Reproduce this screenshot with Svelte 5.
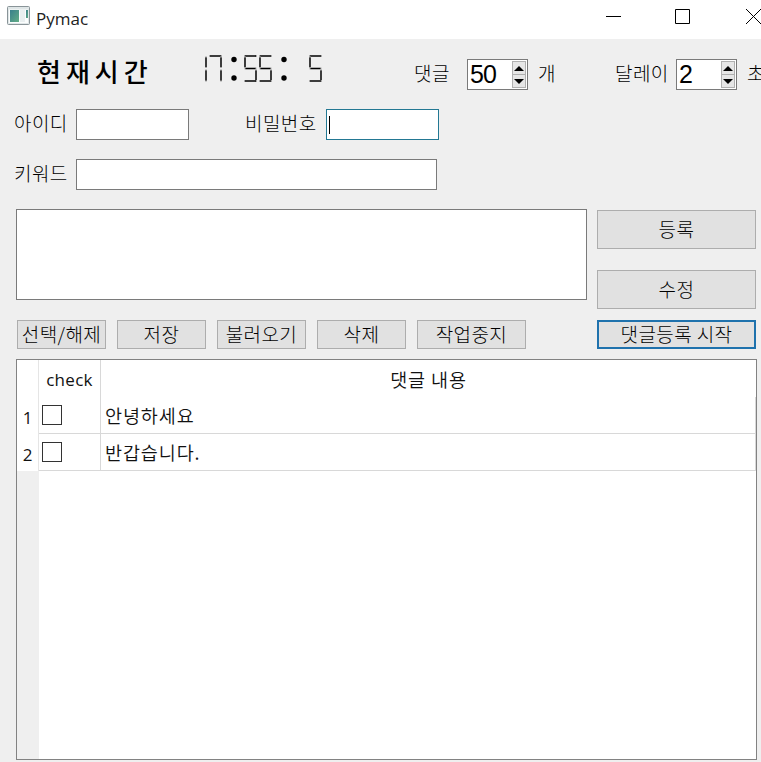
<script>
  // Segments: a top, b upper right, c lower right, d bottom, e lower left, f upper left, g middle
  const segments = {
    a: [1, 1, 12, 1],
    b: [12, 2.5, 12, 12],
    c: [12, 15.5, 12, 25.5],
    d: [1, 26, 12, 26],
    e: [1, 15.5, 1, 25.5],
    f: [1, 2.5, 1, 12],
    g: [1.5, 13.5, 11.5, 13.5],
  }

  const digits = {
    ' ': '',
    0: 'abcdef',
    1: 'bc',
    2: 'abged',
    3: 'abgcd',
    4: 'fgbc',
    5: 'afgcd',
    6: 'afgecd',
    7: 'abc',
    8: 'abcdefg',
    9: 'abcdfg',
  }

  let time = '17:55: 5'
  let count = $state(50)
  let delay = $state(2)
  let id = $state('')
  let password = $state('')
  let keyword = $state('')
  let comment = $state('')

  let rows = $state([
    { checked: false, text: '안녕하세요' },
    { checked: false, text: '반갑습니다.' },
  ])

  const toggleAll = () => {
    const all = rows.every((row) => row.checked)
    rows.forEach((row) => (row.checked = !all))
  }

  const add = () => {
    if (comment.trim()) {
      rows.push({ checked: false, text: comment.trim() })
      comment = ''
    }
  }

  const remove = () => {
    rows = rows.filter((row) => !row.checked)
  }
</script>

{#snippet arrows(up, down)}
  <span class="arrows">
    <button onclick={up} aria-label="up">
      <svg width="10" height="5" viewBox="0 0 10 5"><path d="M0 5L5 0L10 5Z" /></svg>
    </button>
    <button onclick={down} aria-label="down">
      <svg width="10" height="5" viewBox="0 0 10 5"><path d="M0 0L5 5L10 0Z" /></svg>
    </button>
  </span>
{/snippet}

<div class="window">
  <header>
    <svg class="app-icon" width="23" height="20" viewBox="0 0 23 20">
      <defs>
        <linearGradient id="pane" x1="0" y1="0" x2="1" y2="1">
          <stop offset="0" stop-color="#397f8c" />
          <stop offset="1" stop-color="#63ad86" />
        </linearGradient>
      </defs>
      <rect x="0.5" y="0.5" width="22" height="18" rx="1" fill="#dfe6e7" stroke="#899498" />
      <rect x="2" y="3.5" width="19" height="13.5" fill="#fbfdfd" />
      <rect x="3" y="4" width="9" height="12" fill="url(#pane)" />
      <rect x="13" y="4" width="5" height="12" fill="#e9eff0" />
      <rect x="19" y="4" width="2" height="8" fill="url(#pane)" />
    </svg>
    <span class="title">Pymac</span>
    <svg class="controls" width="156" height="17" viewBox="0 0 156 17">
      <path d="M1 8.5H16M70.5 1.5H84.5V15.5H70.5ZM141 1L156 16M156 1L141 16" />
    </svg>
  </header>

  <div class="row top">
    <h1>현재시간</h1>
    <div class="clock" role="timer" aria-label={time}>
      {#each time as char}
        {#if char === ':'}
          <svg width="20" height="28" viewBox="0 0 20 28">
            <circle cx="10" cy="4.5" r="2.7" />
            <circle cx="10" cy="23" r="2.7" />
          </svg>
        {:else}
          <svg width="15" height="28" viewBox="0 0 15 28">
            {#each digits[char] as name}
              {@const [x1, y1, x2, y2] = segments[name]}
              <line class="bevel" {x1} {y1} {x2} {y2} />
              <line {x1} {y1} {x2} {y2} />
            {/each}
          </svg>
        {/if}
      {/each}
    </div>
    <span class="label comments">댓글</span>
    <div class="spin">
      <input bind:value={count} aria-label="댓글" />
      {@render arrows(() => count++, () => count--)}
    </div>
    <span class="label unit">개</span>
    <span class="label delay">달레이</span>
    <div class="spin">
      <input bind:value={delay} aria-label="달레이" />
      {@render arrows(() => delay++, () => delay--)}
    </div>
    <span class="label unit">초</span>
  </div>

  <div class="row">
    <label class="label" for="id">아이디</label>
    <input class="field" id="id" bind:value={id} />
    <label class="label password" for="password">비밀번호</label>
    <div class="active">
      <input class="field" id="password" type="password" bind:value={password} />
      <span class="caret"></span>
    </div>
  </div>

  <div class="row">
    <label class="label" for="keyword">키워드</label>
    <input class="field wide" id="keyword" bind:value={keyword} />
  </div>

  <div class="editor">
    <textarea bind:value={comment} aria-label="댓글 내용"></textarea>
    <div class="side">
      <button class="btn tall" onclick={add}>등록</button>
      <button class="btn tall">수정</button>
    </div>
  </div>

  <div class="actions">
    <button class="btn" onclick={toggleAll}>선택/해제</button>
    <button class="btn">저장</button>
    <button class="btn">불러오기</button>
    <button class="btn" onclick={remove}>삭제</button>
    <button class="btn stop">작업중지</button>
    <button class="btn start">댓글등록 시작</button>
  </div>

  <div class="table">
    <div class="line head">
      <span class="num"></span>
      <span class="check">check</span>
      <span class="text">댓글 내용</span>
    </div>
    {#each rows as row, i}
      <div class="line">
        <span class="num">{i + 1}</span>
        <span class="check"><input type="checkbox" bind:checked={row.checked} aria-label={row.text} /></span>
        <span class="text">{row.text}</span>
      </div>
    {/each}
    <div class="rest"></div>
  </div>
</div>

<style>
  :global(body) {
    margin: 0;
    overflow: hidden;
  }

  .window {
    width: 761px;
    height: 762px;
    box-sizing: border-box;
    overflow: hidden;
    background: #efefef;
    color: #000;
    font-family: 'Noto Sans CJK KR', sans-serif;
    font-size: 19px;
    font-weight: 300;
    letter-spacing: 0.4px;
  }

  .window * {
    box-sizing: border-box;
  }

  svg {
    display: block;
    flex: none;
  }

  input,
  button,
  textarea {
    margin: 0;
    padding: 0;
    border-radius: 0;
    outline: none;
    font: inherit;
    letter-spacing: inherit;
    color: inherit;
  }

  header {
    display: flex;
    height: 39px;
    padding-left: 7px;
    background: #fff;
  }

  .app-icon {
    margin-top: 6px;
  }

  .title {
    width: 60px;
    margin: 6px 0 0 6px;
    font: 17px/25px 'Open Sans', sans-serif;
    letter-spacing: 0;
    color: #222;
  }

  .controls {
    margin: 8px 0 0 509px;
    fill: none;
    stroke: #000;
  }

  .row {
    display: flex;
    height: 31px;
    margin-bottom: 19px;
    padding-left: 14px;
    white-space: nowrap;
  }

  .top {
    margin-top: 20px;
  }

  h1 {
    flex: none;
    width: 157px;
    margin: -7px 0 0 23px;
    font-size: 26px;
    font-weight: 500;
    line-height: 38px;
    letter-spacing: 5px;
  }

  .clock {
    display: flex;
    flex: none;
    width: 220px;
    margin-top: -4px;
  }

  .clock line {
    stroke: #000;
    stroke-width: 1.3;
  }

  .clock .bevel {
    stroke: #aaa;
    stroke-width: 2;
    stroke-linecap: square;
  }

  .label {
    flex: none;
    width: 62px;
    line-height: 27px;
  }

  .comments {
    width: 53px;
  }

  .unit {
    width: 18px;
    margin-left: 10px;
  }

  .delay {
    width: 61px;
    margin-left: 59px;
  }

  .password {
    width: 81px;
    margin-left: 56px;
  }

  .spin {
    display: flex;
    flex: none;
    width: 61px;
    height: 31px;
    border: 1px solid #7a7a7a;
    background: #fff;
  }

  .spin input {
    width: 44px;
    height: 29px;
    padding-left: 2px;
    border: 0;
    background: none;
    font: 25px/29px 'Liberation Sans', sans-serif;
    letter-spacing: -1px;
  }

  .arrows {
    display: flex;
    flex-direction: column;
    width: 14px;
    height: 27px;
    margin-top: 1px;
    border: 1px solid #b0b0b0;
    background: #e6e6e6;
  }

  .arrows button {
    display: flex;
    flex: 1;
    align-items: center;
    justify-content: center;
    border: 0;
    background: none;
  }

  .arrows button + button {
    border-top: 1px solid #b0b0b0;
  }

  .field {
    flex: none;
    width: 113px;
    height: 31px;
    padding: 0 4px;
    border: 1px solid #7a7a7a;
    background: #fff;
  }

  .wide {
    width: 361px;
  }

  .active {
    position: relative;
  }

  .active .field {
    display: block;
    border-color: #237893;
  }

  .caret {
    position: absolute;
    top: 7px;
    left: 3px;
    width: 1px;
    height: 18px;
    background: #000;
  }

  .editor {
    display: flex;
    gap: 10px;
    margin-left: 16px;
  }

  textarea {
    width: 571px;
    height: 91px;
    padding: 4px;
    border: 1px solid #7a7a7a;
    background: #fff;
    resize: none;
  }

  .side {
    display: flex;
    flex-direction: column;
    gap: 21px;
    margin-top: 1px;
  }

  .btn {
    width: 89px;
    height: 29px;
    padding-bottom: 1px;
    border: 1px solid #adadad;
    background: #e1e1e1;
    line-height: 26px;
    white-space: nowrap;
  }

  .tall {
    width: 159px;
    height: 39px;
  }

  .actions {
    display: flex;
    gap: 11px;
    margin: 11px 0 10px 17px;
  }

  .stop {
    width: 109px;
  }

  .start {
    width: 159px;
    margin-left: 60px;
    border: 2px solid #1f72ad;
    line-height: 24px;
  }

  .table {
    display: flex;
    flex-direction: column;
    width: 741px;
    height: 401px;
    margin-left: 16px;
    border: 1px solid #828282;
    background: #fff;
    font-weight: 350;
    font-size: 18.5px;
    letter-spacing: 0.9px;
  }

  .line {
    display: flex;
    height: 37px;
    line-height: 36px;
    color: #111;
  }

  .num {
    width: 22px;
    border-right: 1px solid #e5e5e5;
    font-family: 'Open Sans', sans-serif;
    font-size: 17px;
    font-weight: 400;
    line-height: 42px;
    letter-spacing: 0;
    text-align: center;
  }

  .check {
    width: 62px;
    padding: 8px 0 0 3px;
    border-right: 1px solid #d8d8d8;
    border-bottom: 1px solid #d8d8d8;
  }

  .check input {
    display: block;
    width: 20px;
    height: 20px;
    border: 1px solid #333;
    background: #fff;
    appearance: none;
  }

  .check input:checked {
    background: #333;
    box-shadow: inset 0 0 0 4px #fff;
  }

  .text {
    width: 655px;
    padding-left: 4px;
    border-right: 1px solid #d8d8d8;
    border-bottom: 1px solid #d8d8d8;
  }

  .head .check {
    padding: 2px 0 0;
    border-bottom: 0;
    font-family: 'Open Sans', sans-serif;
    font-size: 17px;
    font-weight: 400;
    letter-spacing: 0.3px;
    text-align: center;
  }

  .head .text {
    padding: 1px 0 0;
    border: 0;
    text-align: center;
  }

  .rest {
    flex: 1;
    width: 22px;
    background: #efefef;
  }
</style>
